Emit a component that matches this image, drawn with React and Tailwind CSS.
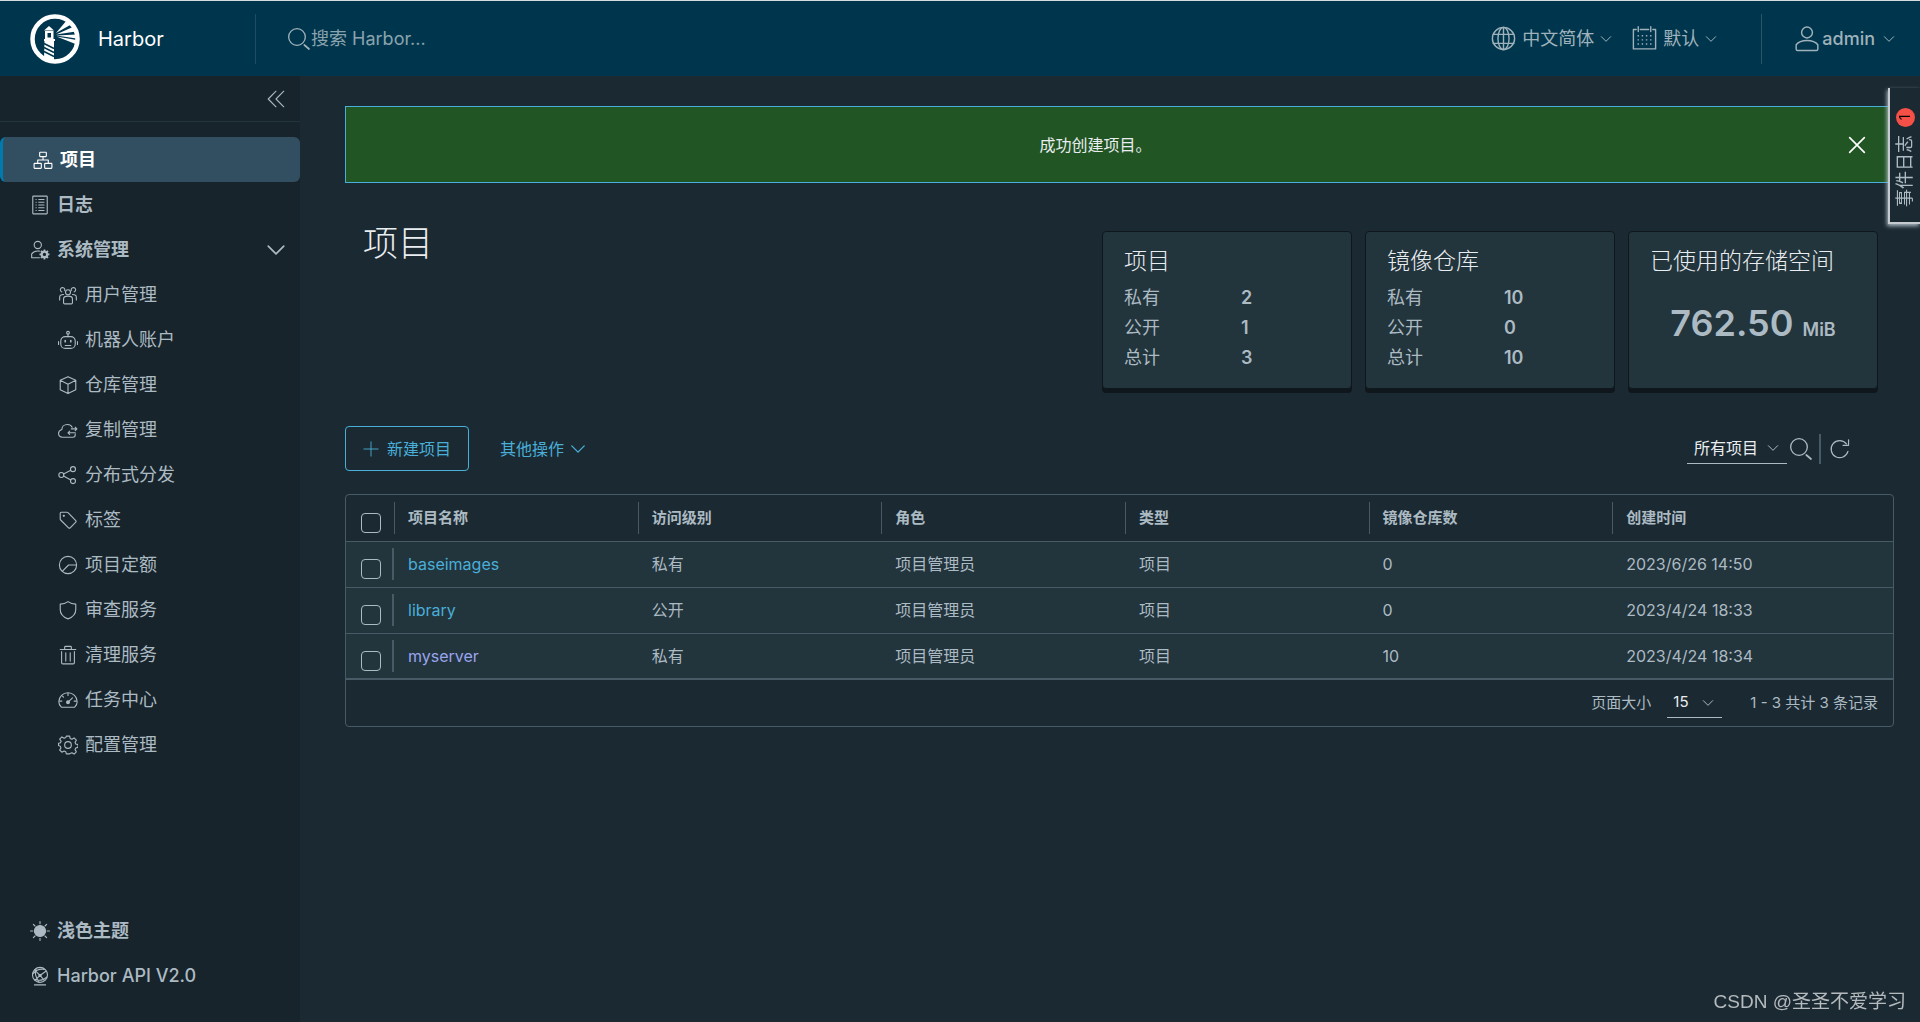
import { useState } from 'react';

const Icon = ({ className = 'size-5', children }) => (
  <svg
    className={`shrink-0 ${className}`}
    viewBox="0 0 36 36"
    fill="none"
    stroke="currentColor"
    strokeWidth="2"
    strokeLinecap="round"
    strokeLinejoin="round"
    aria-hidden="true"
  >
    {children}
  </svg>
);

const icons = {
  projects: (
    <>
      <rect x="12" y="4" width="12" height="8" rx="1" />
      <rect x="2" y="24" width="13" height="9" rx="1" />
      <rect x="21" y="24" width="13" height="9" rx="1" />
      <path d="M18 12v6M8.500 24v-6h19v6" />
    </>
  ),
  logs: (
    <>
      <rect x="5" y="2" width="26" height="32" rx="1" />
      <path
        d="M10 8h2M15 8h11M10 13h2M15 13h11M10 18h2M15 18h11M10 23h2M15 23h11M10 28h2M15 28h11"
        strokeLinecap="butt"
      />
    </>
  ),
  admin: (
    <>
      <circle cx="14" cy="9" r="6.500" />
      <path d="M17 32H3v-7c3-4 8-6 14-5" />
      <circle cx="26" cy="26" r="5" strokeWidth="4" />
      <path
        d="M26 17v3M26 32v3M17 26h3M32 26h3M19.600 19.600l2.200 2.200M30.200 30.200l2.200 2.200M19.600 32.400l2.200-2.200M30.200 21.800l2.200-2.200"
        strokeWidth="3"
        strokeLinecap="butt"
      />
    </>
  ),
  users: (
    <>
      <circle cx="18" cy="13" r="4.500" />
      <path d="M10 32v-7c0-3 3-5 8-5s8 2 8 5v7c0 1-1 2-2 2H12c-1 0-2-1-2-2z" />
      <path d="M12 10a4 4 0 1 0-5 2.500M24 10a4 4 0 1 1 5 2.500" />
      <path d="M3 27v-5c0-3 2-5 7-5M33 27v-5c0-3-2-5-7-5" />
    </>
  ),
  robot: (
    <>
      <rect x="5" y="12" width="26" height="21" rx="8" />
      <circle cx="18" cy="5" r="2.500" />
      <path d="M18 8v4M1 21v5M35 21v5M13 28h10" />
      <path d="M13 19v2M23 19v2" strokeWidth="3" />
    </>
  ),
  box: (
    <path d="M18 3l14 6.500v17L18 33.500 4 26.500v-17zM4 9.500l14 7 14-7M18 16.500v17" />
  ),
  replication: (
    <>
      <path d="M31 25v2c0 2-2 4-4 4H8c-4 0-7-3-7-7 0-4 3-6 6-7 0-5 4-9 10-9 4 0 7 2 8.500 5" />
      <path d="M24 16h10M31 13l3 3-3 3M31 23H18M21 20l-3 3 3 3" />
    </>
  ),
  share: (
    <>
      <circle cx="6" cy="18" r="4.500" />
      <circle cx="27" cy="7.500" r="4.500" />
      <circle cx="27" cy="29" r="4.500" />
      <path d="M10 16l13-6.500M10 20l13 7" />
    </>
  ),
  tag: (
    <>
      <path d="M4 6c0-1 1-2 2-2h10c1 0 1.500.3 2 .8L32 19c1 1 1 2 0 3L22 32c-1 1-2 1-3 0L4.800 18c-.5-.5-.8-1-.8-2z" />
      <circle cx="10.500" cy="10.500" r="1" strokeWidth="2" />
    </>
  ),
  quota: (
    <>
      <circle cx="18" cy="18" r="15.500" />
      <path d="M33 18H19L8 29" />
    </>
  ),
  shield: (
    <path d="M18 3c4 3 9 4.500 14 4.500V17c0 8-6 14-14 17C10 31 4 25 4 17V7.500C9 7.500 14 6 18 3z" />
  ),
  trash: (
    <path d="M4 8h28M12 8V4c0-1 .5-1.500 1.500-1.500h9c1 0 1.500.5 1.500 1.500v4M6.500 12v20c0 1 .5 2 2 2h19c1.500 0 2-1 2-2V12M14 14v15M22 14v15" />
  ),
  dashboard: (
    <>
      <path d="M6 31h24c3-3 4.500-6 4.500-10C34.500 12 27 5 18 5S1.500 12 1.500 21c0 4 1.500 7 4.500 10z" />
      <path d="M18 6v4M3 20h4M29 20h4M8 11l2 2M26 14l-6 6" />
      <circle cx="18" cy="22" r="2.500" fill="currentColor" />
    </>
  ),
  cog: (
    <>
      <path d="M15 2h6l1 4.500 3 1.300 4-2.500 4 4-2.300 4 1.300 3 4 1v5l-4 1-1.300 3 2.300 4-4 4-4-2.400-3 1.300L21 34h-6l-1-4-3-1.200L7 31l-4-4 2.300-3.800-1.300-3L1 19v-4l3.500-1 1.200-3L3 7.500l4-4 4 2.500 3-1.300z" />
      <circle cx="18" cy="18" r="6" />
    </>
  ),
  sun: (
    <>
      <circle cx="18" cy="18" r="10" fill="currentColor" />
      <path d="M18 1v4M18 31v4M1 18h4M31 18h4M6 6l3 3M27 27l3 3M6 30l3-3M27 9l3-3" />
    </>
  ),
  api: (
    <>
      <circle cx="18" cy="16" r="13.500" />
      <path d="M8 34h20M8 7l10 10 11-8M18 17l7 8M18 17L9 26M5 14c5-6 14-9 21-8M11 5c-3 7-1 15 5 24M30 20c-6 6-14 7-22 4" />
      <circle cx="18" cy="17" r="2" fill="currentColor" />
    </>
  ),
  globe: (
    <>
      <circle cx="18" cy="18" r="16" />
      <ellipse cx="18" cy="18" rx="8" ry="16" />
      <path d="M18 2v32M3 12h30M3 25h30" />
    </>
  ),
  calendar: (
    <>
      <path d="M6 5H2v28h32V5h-4M12 5h12M9 1v7M27 1v7" />
      <path
        d="M8 14h2M14 14h2M20 14h2M26 14h2M8 20h2M14 20h2M20 20h2M26 20h2M8 26h2M14 26h2M20 26h2M26 26h2"
        strokeLinecap="butt"
      />
    </>
  ),
  user: (
    <>
      <circle cx="18" cy="9" r="7.500" />
      <path d="M3 26c3-4 9-6 15-6s12 2 15 6v6c0 1-1 2-2 2H5c-1 0-2-1-2-2z" />
    </>
  ),
  search: (
    <>
      <circle cx="15" cy="15" r="12.500" />
      <path d="M26 27l7 6" strokeWidth="2.500" />
    </>
  ),
  refresh: <path d="M31 22a14 14 0 1 1-2.500-12.500M32 3v9h-9" />,
  chevron: <path d="M4 11l14 14 14-14" />,
  collapse: <path d="M18 4L4 18l14 14M32 4L18 18l14 14" />,
  close: <path d="M7 7l22 22M29 7L7 29" strokeWidth="2.500" />,
  plus: <path d="M18 2v32M2 18h32" />,
};

const adminItems = [
  { icon: 'users', label: '用户管理' },
  { icon: 'robot', label: '机器人账户' },
  { icon: 'box', label: '仓库管理' },
  { icon: 'replication', label: '复制管理' },
  { icon: 'share', label: '分布式分发' },
  { icon: 'tag', label: '标签' },
  { icon: 'quota', label: '项目定额' },
  { icon: 'shield', label: '审查服务' },
  { icon: 'trash', label: '清理服务' },
  { icon: 'dashboard', label: '任务中心' },
  { icon: 'cog', label: '配置管理' },
];

const stats = [
  { title: '项目', rows: [['私有', 2], ['公开', 1], ['总计', 3]] },
  { title: '镜像仓库', rows: [['私有', 10], ['公开', 0], ['总计', 10]] },
];

const columns = ['项目名称', '访问级别', '角色', '类型', '镜像仓库数', '创建时间'];

const projects = [
  { name: 'baseimages', access: '私有', repos: 0, created: '2023/6/26 14:50' },
  { name: 'library', access: '公开', repos: 0, created: '2023/4/24 18:33' },
  { name: 'myserver', access: '私有', repos: 10, created: '2023/4/24 18:34', visited: true },
];

const Logo = () => (
  <svg className="size-[50px] shrink-0" viewBox="0 0 50 50" fill="#fff" aria-hidden="true">
    <circle cx="25" cy="25" r="22.500" fill="none" stroke="#fff" strokeWidth="4.500" />
    <path d="M19 12l5 4.500H14z" />
    <path d="M15 17h8.500v8.500H15zM17.500 19v4.500h3.500V19z" fillRule="evenodd" />
    <path d="M14 25h11v2H14zM14.500 27h9.500v21l-10-3z" />
    <path
      d="M14 29.500l10 5M14 33.500l10 5M14 37.500l10 5"
      stroke="#00364d"
      strokeWidth="1.500"
      fill="none"
    />
    <path d="M26 19L37 6l5 4zM26 20.500l18-8 2 5zM26.500 21.500l20-1v4zM26.500 22.500l20 3.500-1 4z" />
  </svg>
);

const Header = () => (
  <header className="flex h-[76px] items-center border-t border-[#d5dde0] bg-[#00364d] text-[18px] text-[#9fb2bb]">
    <a href="#home" className="flex w-[255px] items-center gap-[18px] pl-[30px] text-[20px] text-white">
      <Logo />
      Harbor
    </a>
    <label className="flex h-[50px] flex-1 items-center border-l border-[#1d4d61] pl-[31px]">
      <Icon className="size-6">{icons.search}</Icon>
      <input
        type="search"
        aria-label="搜索 Harbor"
        placeholder="搜索 Harbor..."
        className="w-80 bg-transparent outline-none placeholder:text-[#8ba3ae]"
      />
    </label>
    <button className="flex items-center">
      <Icon className="mr-1.5 size-[25px]">{icons.globe}</Icon>
      中文简体
      <Icon className="ml-1.5 size-3 stroke-3">{icons.chevron}</Icon>
    </button>
    <button className="ml-5 flex items-center">
      <Icon className="mr-1.5 size-[25px]">{icons.calendar}</Icon>
      默认
      <Icon className="ml-1.5 size-3 stroke-3">{icons.chevron}</Icon>
    </button>
    <button className="ml-11 flex h-[50px] items-center border-l border-[#2a5668] pr-[25px] pl-8 font-medium">
      <Icon className="mr-0.5 size-[26px]">{icons.user}</Icon>
      admin
      <Icon className="ml-2 size-3 stroke-3">{icons.chevron}</Icon>
    </button>
  </header>
);

const Sidebar = () => (
  <nav className="flex w-[300px] shrink-0 flex-col bg-[#17242b] pb-6 text-[18px]">
    <div className="flex h-[46px] items-center justify-end border-b border-[#22343c] pr-3.5">
      <button aria-label="收起菜单">
        <Icon className="size-5">{icons.collapse}</Icon>
      </button>
    </div>
    <a
      href="#projects"
      className="mt-[15px] flex h-[45px] items-center gap-[7px] rounded-md border-l-3 border-[#0079ad] bg-[#324f62] pl-[30px] font-bold text-white"
    >
      <Icon>{icons.projects}</Icon>
      项目
    </a>
    <a href="#logs" className="flex h-[45px] items-center gap-[7px] pl-[30px] font-bold">
      <Icon>{icons.logs}</Icon>
      日志
    </a>
    <button className="flex h-[45px] items-center gap-[7px] pr-3.5 pl-[30px] font-bold">
      <Icon>{icons.admin}</Icon>
      系统管理
      <Icon className="ml-auto size-5 stroke-3">{icons.chevron}</Icon>
    </button>
    <ul>
      {adminItems.map((item) => (
        <li key={item.icon}>
          <a href={`#${item.icon}`} className="flex h-[45px] items-center gap-[7px] pl-[58px]">
            <Icon>{icons[item.icon]}</Icon>
            {item.label}
          </a>
        </li>
      ))}
    </ul>
    <button className="mt-auto flex h-[45px] items-center gap-[7px] pl-[30px] font-bold">
      <Icon>{icons.sun}</Icon>
      浅色主题
    </button>
    <a href="#api" className="flex h-[45px] items-center gap-[7px] pl-[30px] font-medium">
      <Icon>{icons.api}</Icon>
      Harbor API V2.0
    </a>
  </nav>
);

const Card = ({ title, children }) => (
  <section className="w-[250px] rounded-sm border border-[#0f171c] bg-[#22343c] px-[21px] pt-[15px] pb-[15px] shadow-[0_4px_0_#0f171c]">
    <h2 className="text-[23px] leading-7 font-light whitespace-nowrap text-[#eaedf0]">{title}</h2>
    {children}
  </section>
);

const Select = ({ label, options, className }) => (
  <span className={`relative inline-flex items-center border-b ${className}`}>
    <select aria-label={label} className="w-full appearance-none bg-transparent outline-none">
      {options.map((option) => (
        <option key={option}>{option}</option>
      ))}
    </select>
    <Icon className="pointer-events-none absolute right-2 size-3 stroke-3 text-[#acbac3]">
      {icons.chevron}
    </Icon>
  </span>
);

const Checkbox = ({ label }) => (
  <input
    type="checkbox"
    aria-label={label}
    className="mt-2.5 ml-[15px] size-5 appearance-none rounded-[4px] border border-[#acbac3] checked:bg-[#49afd9]"
  />
);

const ProjectTable = () => (
  <div className="mt-[23px] rounded-[4px] border border-[#495a67] text-[16px]">
    <table className="w-full table-fixed border-collapse text-left">
      <colgroup>
        <col className="w-12" />
        <col className="w-[15.75%]" />
        <col className="w-[15.75%]" />
        <col className="w-[15.75%]" />
        <col className="w-[15.75%]" />
        <col className="w-[15.75%]" />
        <col />
      </colgroup>
      <thead className="text-[15px]">
        <tr className="h-[46px] border-b border-[#495a67]">
          <th>
            <div className="flex h-8 items-center">
              <Checkbox label="全选" />
            </div>
          </th>
          {columns.map((column) => (
            <th key={column} className="font-bold">
              <div className="flex h-8 items-center border-l border-[#495a67] pl-[13px]">
                {column}
              </div>
            </th>
          ))}
        </tr>
      </thead>
      <tbody className="bg-[#22343c]">
        {projects.map((project) => (
          <tr key={project.name} className="h-[46px] border-b border-[#495a67] last:border-b-2">
            <td>
              <div className="flex h-8 items-center border-r-2 border-[#495a67]">
                <Checkbox label={project.name} />
              </div>
            </td>
            <td className="pl-3.5">
              <a
                href={`#${project.name}`}
                className={project.visited ? 'text-[#9aa5ee]' : 'text-[#49afd9]'}
              >
                {project.name}
              </a>
            </td>
            <td className="pl-3.5">{project.access}</td>
            <td className="pl-3.5">项目管理员</td>
            <td className="pl-3.5">项目</td>
            <td className="pl-3.5">{project.repos}</td>
            <td className="pl-3.5">{project.created}</td>
          </tr>
        ))}
      </tbody>
    </table>
    <div className="flex h-[46px] items-center justify-end pr-[15px] text-[15px]">
      页面大小
      <Select
        label="页面大小"
        options={['15', '25', '50']}
        className="mr-7 ml-4 h-[30px] w-[55px] border-[#acbac3] pl-1.5 text-[#eaedf0]"
      />
      1 - 3 共计 3 条记录
    </div>
  </div>
);

const App = () => {
  const [showAlert, setShowAlert] = useState(true);

  return (
    <div className="flex min-h-screen flex-col bg-[#1b2a32] font-['Inter','Noto_Sans_CJK_SC',sans-serif] text-[#acbac3]">
      <Header />
      <div className="flex flex-1">
        <Sidebar />
        <main className="min-w-0 flex-1 pt-[30px] pr-[26px] pl-[45px]">
          {showAlert && (
            <div
              role="alert"
              className="flex h-[77px] items-center border border-[#49afd9] bg-[#215523] pr-6 text-[16px] text-[#eaedf0]"
            >
              <p className="flex-1 text-center">成功创建项目。</p>
              <button aria-label="关闭" className="text-white" onClick={() => setShowAlert(false)}>
                <Icon className="size-6">{icons.close}</Icon>
              </button>
            </div>
          )}

          <div className="mt-9 flex items-start justify-between pr-4 pl-[18px]">
            <h1 className="text-[35px] leading-12 font-light text-[#eaedf0]">项目</h1>
            <div className="mt-3 flex items-stretch gap-[13px]">
              {stats.map((stat) => (
                <Card key={stat.title} title={stat.title}>
                  <dl className="mt-2 grid grid-cols-2 text-[18px] leading-[30px]">
                    {stat.rows.map(([label, value]) => (
                      <div key={label} className="contents">
                        <dt>{label}</dt>
                        <dd className="pl-3.5 font-semibold">{value}</dd>
                      </div>
                    ))}
                  </dl>
                </Card>
              ))}
              <Card title="已使用的存储空间">
                <p className="mt-6 text-center text-[36px] leading-12 font-semibold whitespace-nowrap">
                  762.50 <span className="text-[18px]">MiB</span>
                </p>
              </Card>
            </div>
          </div>

          <div className="mt-[37px] flex items-center text-[16px] text-[#49afd9]">
            <button className="flex h-[45px] items-center gap-2 rounded-[4px] border border-[#49afd9] px-[17px]">
              <Icon className="size-4">{icons.plus}</Icon>
              新建项目
            </button>
            <button className="ml-[31px] flex items-center gap-1.5">
              其他操作
              <Icon className="size-4 stroke-3">{icons.chevron}</Icon>
            </button>
            <div className="ml-auto flex items-center pr-[43px] text-[#acbac3]">
              <Select
                label="项目类型"
                options={['所有项目', '私有项目', '公开项目']}
                className="h-[30px] w-[100px] border-[#acbac3] pl-[7px] text-[#eaedf0]"
              />
              <button aria-label="搜索">
                <Icon className="ml-0.5 size-6">{icons.search}</Icon>
              </button>
              <button
                aria-label="刷新"
                className="ml-1.5 flex h-[30px] items-center border-l-2 border-[#495a67] pl-2"
              >
                <Icon className="size-[22px]">{icons.refresh}</Icon>
              </button>
            </div>
          </div>

          <ProjectTable />
        </main>
      </div>

      <button className="fixed top-[88px] right-0 flex h-[136px] w-8 flex-col items-center border-b-2 border-l-2 border-[#c5cbce] bg-[#1b2a32] pt-5 text-[18px] shadow-[-1px_2px_4px_#acbac3]">
        <span className="flex size-[19px] items-center justify-center rounded-full bg-[#f55047] text-[14px] text-black">
          <span className="-rotate-90">1</span>
        </span>
        <span className="mt-2 rotate-180 leading-6 whitespace-nowrap [text-orientation:sideways] [writing-mode:vertical-rl]">
          事件日志
        </span>
      </button>
      <span className="fixed right-3.5 bottom-1.5 font-['Liberation_Sans','Noto_Sans_CJK_SC',sans-serif] text-[19px] text-[#b4babd]">
        CSDN @圣圣不爱学习
      </span>
    </div>
  );
};

export default App;
